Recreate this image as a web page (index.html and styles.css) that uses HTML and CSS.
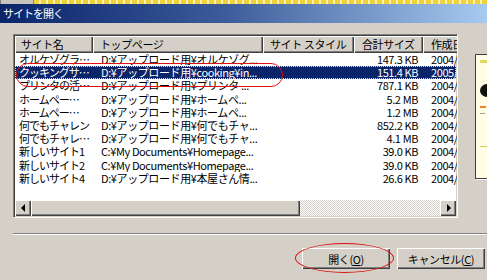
FILE: index.html
```html
<!DOCTYPE html>
<html lang="ja">
<head>
  <meta charset="UTF-8" />
  <title>サイトを開く</title>
  <link rel="stylesheet" href="styles.css">
</head>
<body>
  <div class="desk">
    <div class="desk-gray"></div>
    <div class="desk-yellow"></div>
  </div>

  <div class="dialog">
    <div class="titlebar">サイトを開く</div>

    <div class="content">
      <div class="top">
        <div class="listview">
          <div class="header">
            <div class="hcell c1">サイト名</div>
            <div class="hcell c2">トップページ</div>
            <div class="hcell c3">サイト スタイル</div>
            <div class="hcell c4">合計サイズ</div>
            <div class="hcell c5">作成日</div>
          </div>

          <div class="rows">
            <div class="row"><span class="c1">オルケゾグラ…</span><span class="c2">D:¥アップロード用¥オルケゾグ...</span><span class="c3"></span><span class="c4">147.3 KB</span><span class="c5">2004/</span></div>
            <div class="row selected"><span class="c1">クッキングサ…</span><span class="c2">D:¥アップロード用¥cooking¥in...</span><span class="c3"></span><span class="c4">151.4 KB</span><span class="c5">2005/</span></div>
            <div class="row"><span class="c1">プリンタの活…</span><span class="c2">D:¥アップロード用¥プリンタ ...</span><span class="c3"></span><span class="c4">787.1 KB</span><span class="c5">2004/</span></div>
            <div class="row"><span class="c1">ホームペー…</span><span class="c2">D:¥アップロード用¥ホームペ...</span><span class="c3"></span><span class="c4">5.2 MB</span><span class="c5">2004/</span></div>
            <div class="row"><span class="c1">ホームペー…</span><span class="c2">D:¥アップロード用¥ホームペ...</span><span class="c3"></span><span class="c4">1.2 MB</span><span class="c5">2004/</span></div>
            <div class="row"><span class="c1">何でもチャレン</span><span class="c2">D:¥アップロード用¥何でもチャ...</span><span class="c3"></span><span class="c4">852.2 KB</span><span class="c5">2004/</span></div>
            <div class="row"><span class="c1">何でもチャレ…</span><span class="c2">D:¥アップロード用¥何でもチャ...</span><span class="c3"></span><span class="c4">4.1 MB</span><span class="c5">2004/</span></div>
            <div class="row"><span class="c1">新しいサイト1</span><span class="c2">C:¥My Documents¥Homepage...</span><span class="c3"></span><span class="c4">39.0 KB</span><span class="c5">2004/</span></div>
            <div class="row"><span class="c1">新しいサイト2</span><span class="c2">C:¥My Documents¥Homepage...</span><span class="c3"></span><span class="c4">39.0 KB</span><span class="c5">2004/</span></div>
            <div class="row"><span class="c1">新しいサイト4</span><span class="c2">D:¥アップロード用¥本屋さん情...</span><span class="c3"></span><span class="c4">26.6 KB</span><span class="c5">2004/</span></div>
          </div>

          <div class="hscroll">
            <div class="sbtn"><span class="arrow-left"></span></div>
            <div class="thumb"></div>
            <div class="track"></div>
            <div class="sbtn"><span class="arrow-right"></span></div>
          </div>
        </div>

        <div class="preview">
          <div class="pv-band"></div>
          <div class="pv-blob"></div>
          <div class="pv-dash"></div>
          <div class="pv-dots"></div>
          <div class="pv-line"></div>
        </div>
      </div>

      <div class="sep"></div>

      <div class="buttons">
        <button class="btn">開く(<u>O</u>)</button>
        <button class="btn">キャンセル(<u>C</u>)</button>
      </div>
    </div>

    <!-- red hand-drawn marks -->
    <div class="mark mark-row"></div>
    <div class="mark mark-btn"></div>
  </div>
</body>
</html>
```

FILE: styles.css
```css
body {
  margin: 0;
  width: 487px;
  height: 280px;
  overflow: hidden;
  background: #d4d0c8;
  font-family: "Noto Sans CJK JP", sans-serif;
  font-size: 11px;
  letter-spacing: -0.4px;
  color: #000;
}

.desk {
  display: flex;
  height: 4px;
}
.desk-gray {
  width: 32px;
  background: #c8c4bc;
  border-left: 1px solid #808080;
  border-right: 1px solid #808080;
}
.desk-yellow {
  flex: 1;
  background: repeating-linear-gradient(90deg, #f2d23c 0 5px, #fff3b0 5px 7px);
}

.dialog {
  position: relative;
  height: 276px;
}

.titlebar {
  height: 19px;
  line-height: 19px;
  padding-left: 3px;
  letter-spacing: -1px;
  color: #fff;
  background: linear-gradient(90deg, #0a246a 0%, #3a5a98 45%, #a6caf0 100%);
}

.content {
  padding: 11px 0 0 13px;
}

.top {
  display: flex;
  align-items: flex-start;
}

.listview {
  box-sizing: border-box;
  flex: none;
  width: 445px;
  height: 184px;
  display: flex;
  flex-direction: column;
  background: #fff;
  border: 1px solid;
  border-color: #808080 #fff #fff #808080;
  box-shadow: inset 1px 1px #404040, inset -1px -1px #d4d0c8;
  padding: 1px;
  overflow: hidden;
}

.header {
  display: flex;
  height: 17px;
  flex: none;
}
.hcell {
  box-sizing: border-box;
  height: 17px;
  line-height: 16px;
  background: #d4d0c8;
  box-shadow: inset 1px 1px #fff, inset -1px -1px #404040, inset -2px -2px #808080;
  white-space: nowrap;
  overflow: hidden;
  flex: none;
}
.header .c1 { padding-left: 6px; }
.header .c2 { padding-left: 7px; }
.header .c3 { padding-left: 7px; }
.header .c4 { padding-left: 8px; }
.header .c5 { padding-left: 8px; }

.c1 { width: 78px; }
.c2 { width: 170px; }
.c3 { width: 91px; }
.c4 { width: 69px; }
.c5 { width: 60px; }

.rows {
  flex: 1;
}
.row {
  display: flex;
  height: 13.2px;
  line-height: 13px;
  white-space: nowrap;
}
.row span {
  box-sizing: border-box;
  flex: none;
  overflow: hidden;
}
.row .c1 { padding-left: 4px; letter-spacing: -1px; }
.row .c2 { padding-left: 8px; }
.row .c4 { text-align: right; padding-right: 5px; }
.row .c5 { padding-left: 8px; }

.row.selected {
  background: #0a246a;
  color: #fff;
  outline: 1px dotted #f0e080;
  outline-offset: -1px;
}

.hscroll {
  display: flex;
  height: 16px;
  flex: none;
}
.sbtn, .thumb {
  box-sizing: border-box;
  background: #d4d0c8;
  box-shadow: inset 1px 1px #fff, inset -1px -1px #404040, inset -2px -2px #808080;
}
.sbtn {
  width: 16px;
  display: flex;
  align-items: center;
  justify-content: center;
}
.thumb {
  width: 269px;
}
.track {
  flex: 1;
  background: repeating-conic-gradient(#fff 0 25%, #d4d0c8 0 50%) 0 0 / 2px 2px;
}
.arrow-left {
  border-top: 4px solid transparent;
  border-bottom: 4px solid transparent;
  border-right: 4px solid #000;
  margin-right: 1px;
}
.arrow-right {
  border-top: 4px solid transparent;
  border-bottom: 4px solid transparent;
  border-left: 4px solid #000;
  margin-left: 1px;
}

.preview {
  box-sizing: border-box;
  flex: none;
  width: 20px;
  height: 125px;
  margin: 20px 0 0 17px;
  padding: 5px 0 0 4px;
  background: #fffde4;
  border: 1px solid #404040;
  box-shadow: 1px 1px #fff;
  display: flex;
  flex-direction: column;
}
.pv-band {
  height: 3px;
  background: #dcd860;
}
.pv-blob {
  width: 14px;
  height: 13px;
  margin-top: 21px;
  border-radius: 50%;
  background: #111;
}
.pv-dash {
  width: 6px;
  height: 2px;
  margin-top: 9px;
  background: #f08030;
}
.pv-dots {
  width: 5px;
  height: 1px;
  margin-top: 5px;
  background: #a0a0a0;
}
.pv-line {
  height: 1px;
  margin-top: 32px;
  background: #d0d060;
}

.sep {
  margin-top: 15px;
  height: 1px;
  background: #808080;
  border-bottom: 1px solid #fff;
}

.buttons {
  display: flex;
  justify-content: flex-end;
  gap: 7px;
  margin-top: 13px;
  padding-right: 2px;
}
.btn {
  box-sizing: border-box;
  width: 88px;
  height: 21px;
  padding: 0;
  border: none;
  background: #d4d0c8;
  font-family: "Noto Sans CJK JP", sans-serif;
  font-size: 11px;
  letter-spacing: -0.4px;
  color: #000;
  box-shadow: inset 1px 1px #fff, inset -1px -1px #404040, inset -2px -2px #808080;
}

.mark {
  position: absolute;
  border: 1px solid #e01010;
}
.mark-row {
  left: 16px;
  top: 59px;
  width: 265px;
  height: 22px;
  border-radius: 12px;
}
.mark-btn {
  left: 295px;
  top: 239px;
  width: 97px;
  height: 28px;
  border-radius: 50%;
}
```
